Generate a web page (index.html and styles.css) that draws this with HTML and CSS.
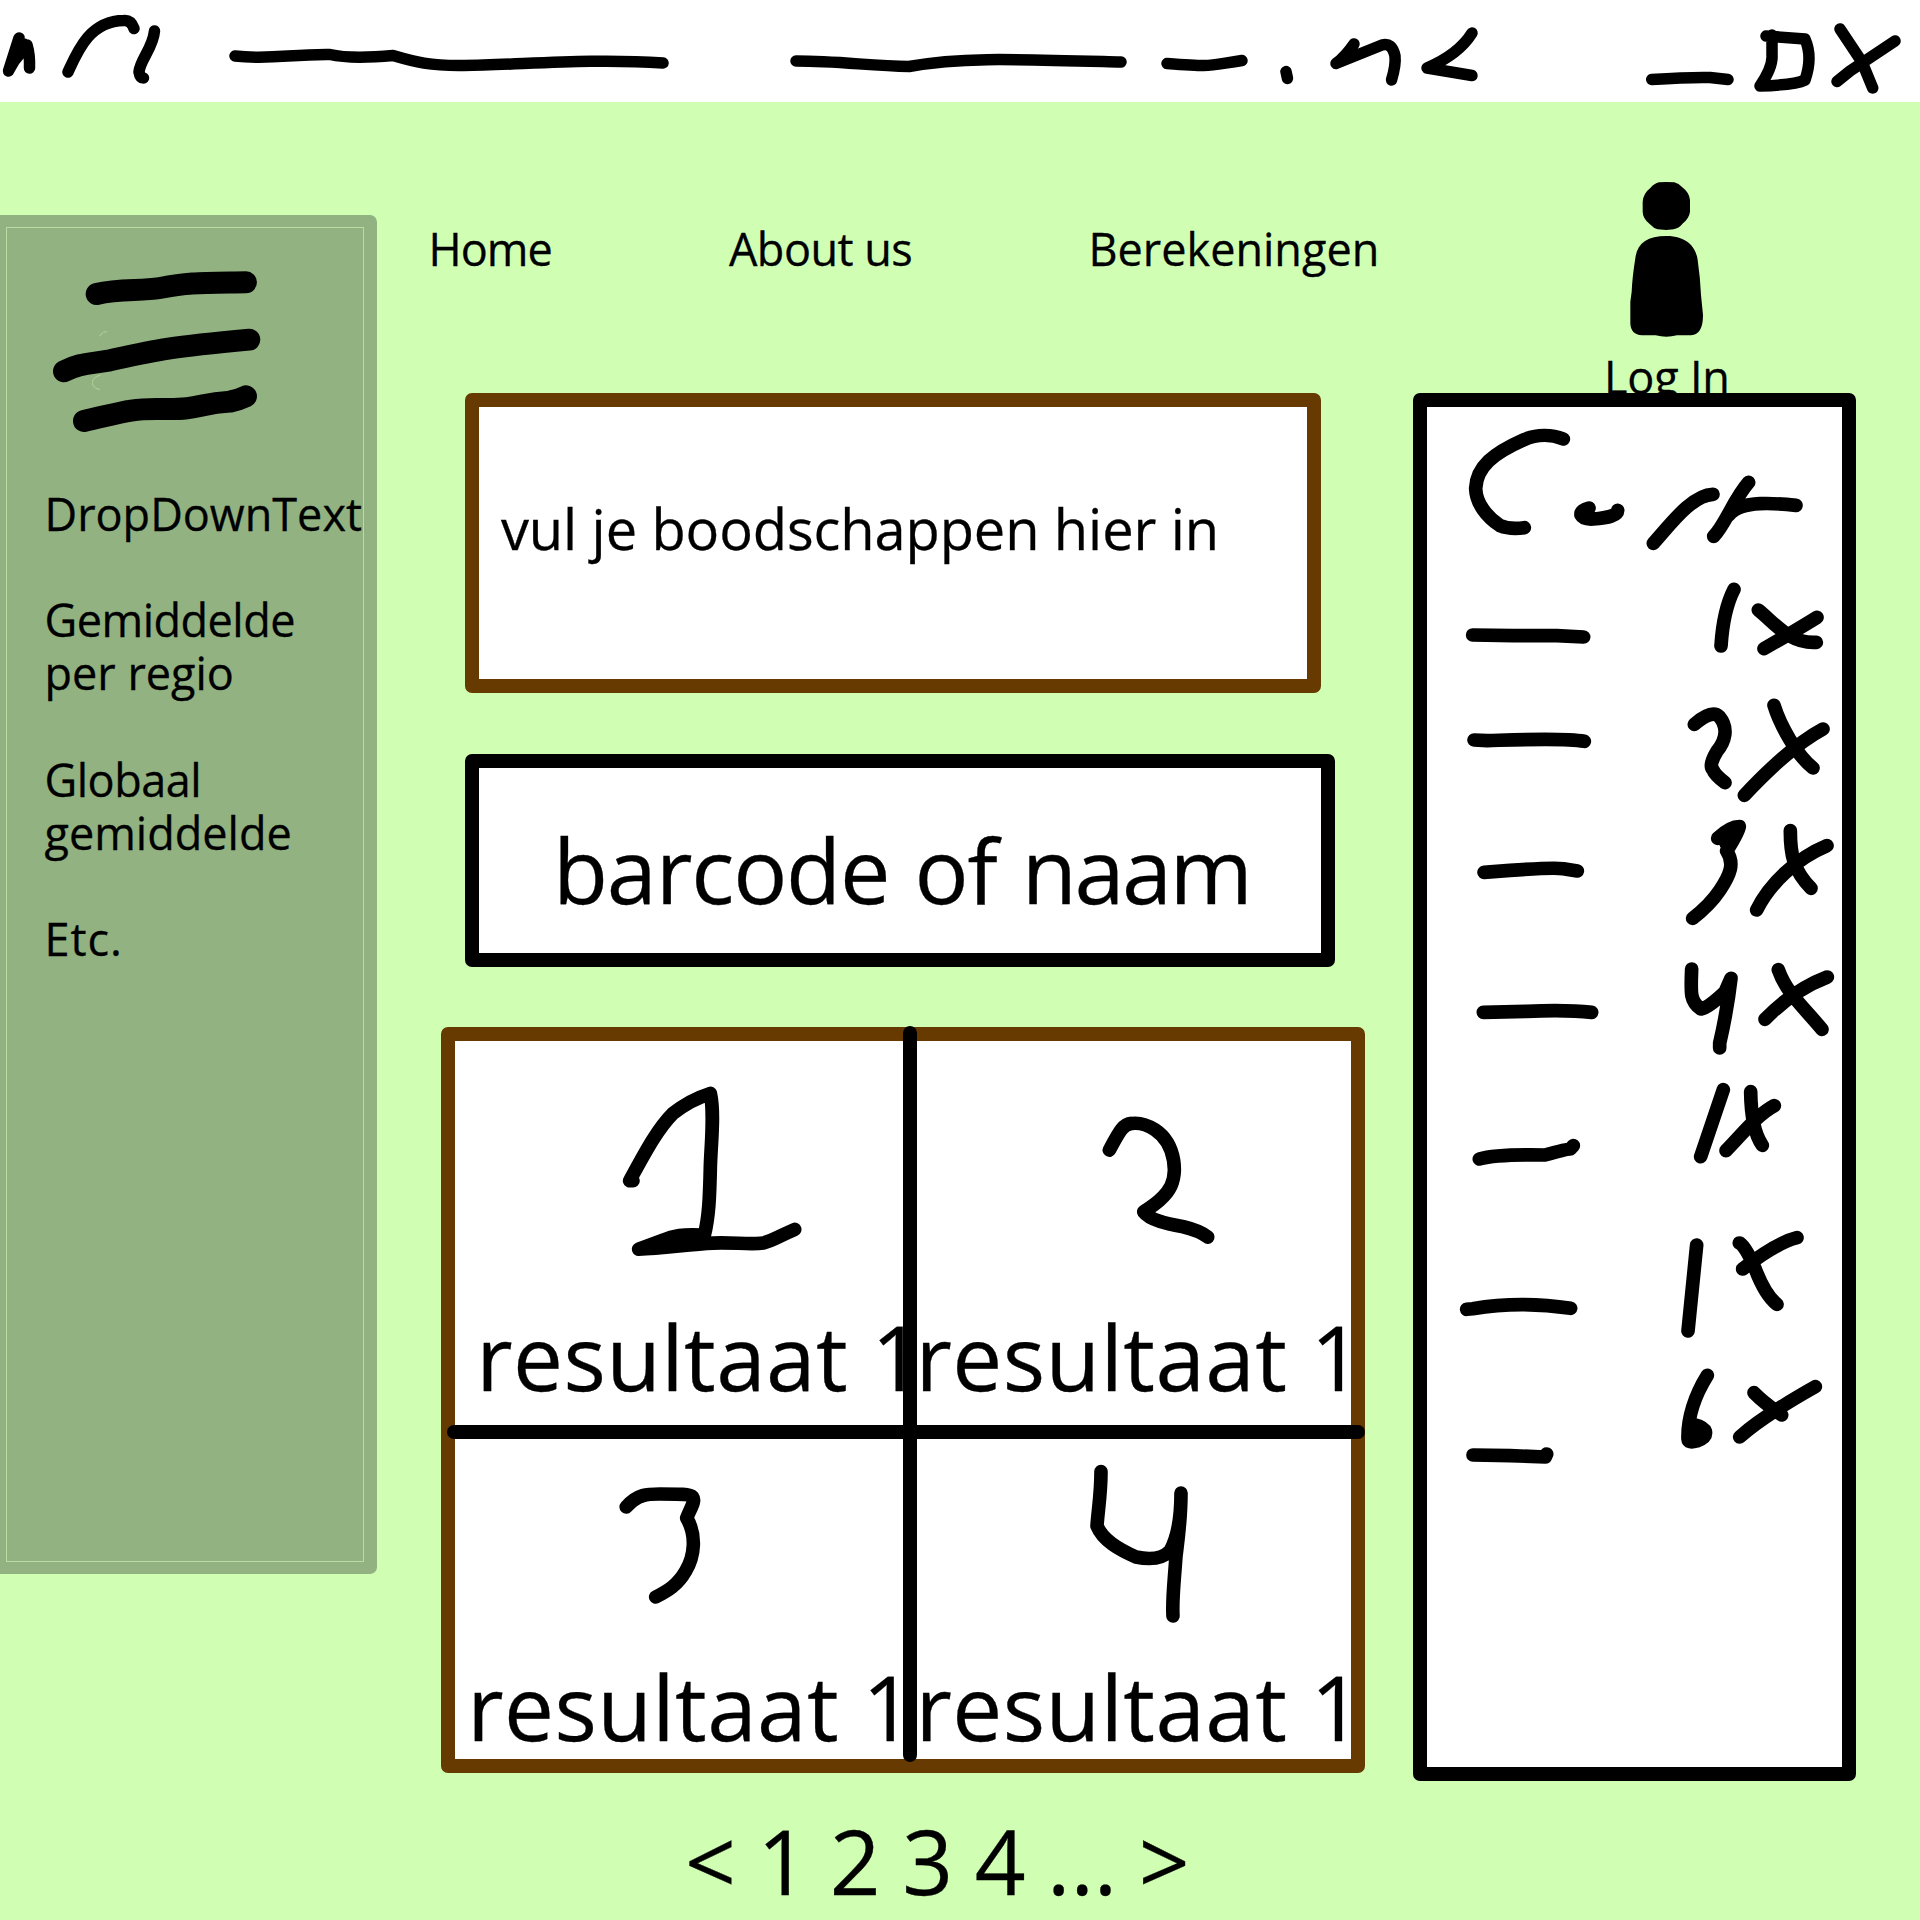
FILE: index.html
```html
<!DOCTYPE html>
<html lang="nl">
<head>
<meta charset="utf-8">
<title>Boodschappen</title>
<link rel="stylesheet" href="styles.css">
</head>
<body>
<header class="titlebar">
  <svg class="ink titlebar-ink" viewBox="0 0 1920 102">
    <g class="fine">
      <path d="M8.500 71L19 38L15 60L27 45Q30 55 29.500 68M9 70L24 44"/>
      <path d="M68 72C78 50 90 21 124 20.500Q131 20 134 28.500"/>
      <path d="M154.500 31C153 48 140 60 139 72Q140 78 143.500 78"/>
      <path d="M235 56C270 60 290 54 330 54.500C345 58 365 58 393 55.500C415 62 430 66 464 65.500C520 65 590 58 663 63"/>
      <path d="M796 61C840 61 870 66 909 66.500C960 57 1010 59 1121 62"/>
      <path d="M1167 63.500C1215 67 1205 66 1242 60.500"/>
      <path d="M1286 71.500L1287.500 78.500"/>
      <path d="M1354 44Q1345 57 1336 63.500L1382 45Q1392 42 1395 56Q1396 65 1391.500 80"/>
      <path d="M1472 33C1464 46 1450 58 1427 68L1472 75.500"/>
    </g>
    <path d="M1651.700 79.500Q1690 77 1710 77.500L1728 79.500M1766 36L1805 39Q1813 57 1805 80Q1795 85 1760 86Q1773 67 1772 55V35M1840 29L1862 62L1872.700 88M1895 41L1850 71L1837 81.500"/>
  </svg>
</header>
<div class="workspace">
  <aside class="sidebar">
    <div class="sidebar-inner">
      <svg class="ink menu-icon" viewBox="120 190 700 520">
        <path d="M290 280C360 263 420 272 480 262C570 245 600 247 738 245M192 512C240 487 270 490 330 479C470 448 500 440 748 417M252 661C370 634 390 624 480 625C610 628 590 608 690 603Q715 598 738 587"/>
        <path class="scratch" d="M299 406Q306 394 320 393M300 524Q277 530 277 547Q280 565 299 566"/>
      </svg>
      <p>DropDownText</p>
      <p><span class="w2">Gemiddelde</span><br>per regio</p>
      <p><span class="w2">Globaal</span><br>gemiddelde</p>
      <p class="w4">Etc.</p>
    </div>
  </aside>
  <main class="content">
    <nav class="nav"><span class="w3">Home</span><span class="w2">About us</span><span>Berekeningen</span></nav>
    <section class="box groceries">vul je boodschappen hier in</section>
    <section class="box lookup">barcode of <span>naam</span></section>
    <section class="box results">
      <article class="cell">
        <svg class="ink" viewBox="76 93 1364 792"><path d="M600 512H610M600 512C650 420 685 355 730 310C765 282 795 265 842 250C855 310 844 400 842 470C840 560 838 620 824 675M820 675C760 672 730 676 700 690L627 717C700 715 780 702 850 699C900 696 965 704 1000 699C1030 692 1050 677 1095 658"/><path class="fill" d="M640 716Q730 668 822 674V698Q720 705 640 716Z"/></svg>
        <span>resultaat 1</span>
      </article>
      <article class="cell">
        <svg class="ink" viewBox="30 93 1322 792"><path d="M628 420C660 360 670 342 695 340C720 337 745 346 765 359C827 400 840 500 800 548C775 580 752 590 731 605C750 630 800 640 850 650Q900 662 923 681"/></svg>
        <span>resultaat 1</span>
      </article>
      <article class="cell lower">
        <svg class="ink px" viewBox="455.300 1432 454.700 223.200"><path d="M626.500 1507C638 1494 648 1494 660 1494C680 1494 690 1494 693 1497C696 1501 691 1508 687 1518C697 1535 695 1556 686 1571C678 1585 668 1591 656 1597"/></svg>
        <span class="shift">resultaat 1</span>
      </article>
      <article class="cell lower">
        <svg class="ink px" viewBox="910 1432 440.700 223.200"><path d="M1101 1471.500C1101 1495 1098 1510 1097 1526C1103 1541 1120 1550 1136 1557C1150 1560 1162 1559 1170 1551C1179 1535 1181 1515 1181 1493C1181 1520 1178 1540 1176 1556C1174 1585 1172 1600 1173 1616"/></svg>
        <span>resultaat 1</span>
      </article>
      <i class="rule vertical"></i>
      <i class="rule horizontal"></i>
    </section>
    <div class="pager">&lt; 1 2 3 4 ... &gt;</div>
  </main>
  <aside class="right">
    <div class="account">
      <svg class="person" viewBox="380 540 240 476"><path d="M498 546L522 547Q535 550 546 562Q567 578 569 600V635Q567 653 548 670Q535 686 520 688L498 690L472 688Q460 685 448 672Q427 655 427 635V605Q429 580 450 564Q462 550 476 547ZM498 708C565 708 588 747 592 780Q600 835 602 885L608 945Q608 1004 572 1006H530Q498 1014 466 1006H425Q391 1004 390 970V905L394 875Q396 830 405 775C410 730 440 708 498 708Z"/></svg>
      <span>Log In</span>
    </div>
    <section class="box cart">
      <svg class="ink" viewBox="81 81 1245 489"><path d="M490 177C455 163 410 162 370 180C280 220 230 260 227 325C228 370 260 410 300 437Q330 449 373 443M567 384Q541 391 543 405Q550 419 580 417Q652 412 653 391M760 490C810 435 875 345 939 343M1046 307C1000 360 975 435 941 469M985 407Q1010 374 1080 371Q1120 369 1188 376"/></svg>
      <ul>
        <li><svg class="ink" viewBox="81 570 1245 360"><path d="M218 765L340 767L470 767L551 771M1002 628Q970 690 963 798M1075 690C1130 735 1170 792 1249 787M1251 712Q1185 753 1092 806"/></svg></li>
        <li><svg class="ink" viewBox="81 930 1245 360"><path d="M222 1080L262 1082C360 1079 490 1073 553 1084M883 1033Q935 988 958 1010C987 1045 975 1085 950 1115Q926 1155 938 1168Q945 1185 975 1208M1122 976C1140 1035 1190 1125 1239 1164M1269 1047Q1170 1100 1033 1246"/></svg></li>
        <li class="tall"><svg class="ink" viewBox="81 90 1245 420"><path d="M252 277L330 271Q460 262 490 266L532 273M953 175Q990 140 1018 140Q1020 150 980 213C1005 250 990 285 960 330Q930 375 878 415M963 170L1010 145L978 190M1171 152C1171 225 1180 270 1233 325M1281 197C1190 235 1110 310 1070 390"/></svg></li>
        <li><svg class="ink" viewBox="81 510 1245 360"><path d="M250 697L380 694Q500 689 575 697M875 567C872 640 870 665 903 687Q925 683 975 636L993 595Q982 690 959 790V804M1135 569C1160 640 1210 680 1266 748M1282 591Q1180 630 1095 718"/></svg></li>
        <li class="tall"><svg class="ink" viewBox="81 870 1245 420"><path d="M238 1137Q290 1122 435 1125Q500 1107 511 1107L520 1097M970 929L902 1130M1052 935C1053 1020 1065 1065 1087 1096M1123 977C1070 1005 1020 1070 978 1112"/></svg></li>
        <li class="tall"><svg class="ink" viewBox="81 90 1245 420"><path d="M200 388L218 386Q360 362 512 385M890 195L864 453M1018 189Q1035 195 1065 265Q1095 345 1131 373M1028 267Q1130 188 1191 173"/></svg></li>
        <li class="tall"><svg class="ink" viewBox="81 510 1245 420"><path d="M219 825L330 827L436 831L440 822M922 586C885 645 862 715 864 777Q865 790 890 783Q920 772 916 754Q912 741 880 733L885 755M1062 638Q1090 667 1145 705M1019 771Q1090 708 1246 620"/></svg></li>
      </ul>
    </section>
  </aside>
</div>
</body>
</html>
```
FILE: styles.css
```css
* { box-sizing: border-box; }
body {
  margin: 0;
  width: 1920px;
  height: 1920px;
  overflow: hidden;
  background: #d0ffb4;
  color: #000;
  font: 45px/53.3px "Open Sans", "Noto Sans", sans-serif;
  -webkit-text-stroke: 0.3px #000;
}
svg { display: block; }
.ink {
  fill: none;
  stroke: #000;
  stroke-width: 41;
  stroke-linecap: round;
  stroke-linejoin: round;
  overflow: visible;
  width: 100%;
}
.ink .fill { fill: #000; stroke: none; }
.ink.px { stroke-width: 13.6; }

.titlebar { height: 102px; background: #fff; }
.titlebar-ink { height: 102px; stroke-width: 11.5; }
.titlebar-ink .fine { stroke-width: 11.5; }

.workspace { display: flex; height: 1818px; }

.sidebar {
  flex: none;
  width: 376.5px;
  height: 1359.5px;
  margin-top: 112.5px;
  padding: 12.5px 12.5px 12.5px 6px;
  background: #92b281;
  border-radius: 0 7px 7px 0;
}
.sidebar-inner {
  height: 100%;
  padding: 35.5px 0 0 33px;
  border: 1px solid #b9dda2;
}
.menu-icon {
  width: 233.3px;
  height: 173.3px;
  stroke-width: 66;
}
.menu-icon .scratch { stroke: #c3e8aa; stroke-width: 2; stroke-dasharray: 14 4; }
.sidebar p { margin: 0 0 53px; padding-left: 4.5px; white-space: nowrap; }
.sidebar .menu-icon + p { margin-top: 50px; }
.w2 { letter-spacing: -0.5px; }
.w3 { letter-spacing: -1px; padding-left: 1px; }
.w4 { letter-spacing: 1px; }

.content { flex: none; width: 1036.5px; padding-top: 120.4px; }
.nav {
  display: grid;
  grid-template-columns: 301.4px 359.6px auto;
  height: 53px;
  padding-left: 51px;
}
.box { border: 14px solid #663a00; border-radius: 7px; background: #fff; }
.groceries {
  width: 855.5px;
  height: 300px;
  margin: 117.6px 0 0 88.5px;
  padding: 89px 0 0 22px;
  font-size: 56px;
  line-height: 64px;
  letter-spacing: -0.1px;
}
.lookup {
  width: 870px;
  height: 212.7px;
  margin: 61px 0 0 88.5px;
  padding: 49px 0 0 74px;
  border-color: #000;
  font-size: 90px;
  line-height: 104px;
  letter-spacing: -1.2px;
  word-spacing: 3px;
}
.lookup span { letter-spacing: -2.5px; }
.results {
  position: relative;
  display: grid;
  grid-template-columns: 454.7px 440.7px;
  grid-template-rows: 391px 326.7px;
  width: 923.4px;
  height: 745.7px;
  margin: 60.3px 0 0 64.8px;
  font-size: 89px;
  line-height: 104px;
  letter-spacing: 0.4px;
  white-space: nowrap;
}
.cell svg { height: 264.2px; }
.cell.lower svg { height: 223.2px; }
.cell span { display: block; padding-left: 21px; }
.cell:nth-child(even) span { padding-left: 5.5px; }
.cell .shift { padding-left: 12px; }
.rule { position: absolute; background: #000; border-radius: 7px; }
.vertical { left: 447.7px; top: -15px; width: 14px; height: 735.7px; }
.horizontal { left: -8px; top: 384.3px; width: 918px; height: 14px; }
.pager {
  margin: 36.8px 0 0 308.5px;
  font-size: 89px;
  line-height: 104px;
  word-spacing: -1.6px;
  white-space: nowrap;
}

.right { flex: none; width: 443px; padding-top: 78px; }
.account { height: 213px; }
.person { width: 80px; height: 158.7px; margin-left: 213.7px; }
.account span {
  display: block;
  margin: 11.5px 0 0 191px;
  letter-spacing: -0.2px;
}
.cart { position: relative; height: 1387.6px; border-color: #000; }
.cart > svg { height: 163px; }
.cart ul { margin: 0; padding: 0; list-style: none; }
.cart li, .cart li svg { height: 120px; }
.cart li.tall, .cart li.tall svg { height: 140px; }
```
